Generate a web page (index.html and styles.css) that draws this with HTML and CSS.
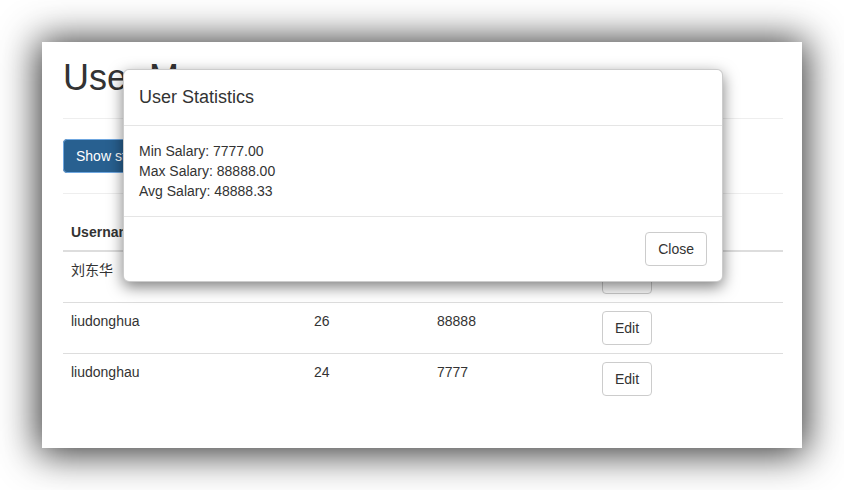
FILE: index.html
```html
<!DOCTYPE html>
<html lang="en">
<head>
<meta charset="utf-8">
<title>User Manager</title>
<link rel="stylesheet" href="styles.css">
</head>
<body>
<div class="stage">
  <div class="window">
    <div class="container">
      <h1 class="title">User Manager</h1>
      <hr class="rule">
      <button class="btn btn-primary btn-focus" type="button">Show statistics</button>
      <hr class="rule">
      <table class="table">
        <colgroup>
          <col class="c1"><col class="c2"><col class="c3"><col class="c4">
        </colgroup>
        <thead>
          <tr><th>Username</th><th>Age</th><th>Salary</th><th>Operation</th></tr>
        </thead>
        <tbody>
          <tr><td class="cjk">刘东华</td><td>30</td><td>50000</td><td><button class="btn btn-default" type="button">Edit</button></td></tr>
          <tr><td>liudonghua</td><td>26</td><td>88888</td><td><button class="btn btn-default" type="button">Edit</button></td></tr>
          <tr><td>liudonghau</td><td>24</td><td>7777</td><td><button class="btn btn-default" type="button">Edit</button></td></tr>
        </tbody>
      </table>
    </div>

    <div class="modal">
      <div class="modal-header">
        <h4 class="modal-title">User Statistics</h4>
      </div>
      <div class="modal-body">
        <div>Min Salary: 7777.00</div>
        <div>Max Salary: 88888.00</div>
        <div>Avg Salary: 48888.33</div>
      </div>
      <div class="modal-footer">
        <button class="btn btn-default" type="button">Close</button>
      </div>
    </div>
  </div>
</div>
</body>
</html>
```

FILE: styles.css
```css
* { box-sizing: border-box; }

html, body {
  margin: 0;
  padding: 0;
  background: #fff;
}

body {
  font-family: "Liberation Sans", Arial, "Noto Sans CJK SC", sans-serif;
  font-size: 14px;
  line-height: 20px;
  color: #333;
}

.stage {
  padding: 42px;
  height: 490px;
}

.window {
  position: relative;
  width: 760px;
  height: 406px;
  background: #fff;
  overflow: hidden;
  box-shadow: 0 2px 36px 4px rgba(0, 0, 0, 0.8);
}

.container {
  width: 720px;
  margin-left: 21px;
  padding-top: 16px;
}

.title {
  margin: 0 0 20px 0;
  font-size: 36px;
  line-height: 39.6px;
  font-weight: 500;
  color: #333;
  white-space: nowrap;
}

.rule {
  margin: 20px 0;
  border: 0;
  border-top: 1px solid #eee;
  height: 0;
}

.title + .rule { margin-top: 0; }

.btn {
  display: inline-block;
  font-family: inherit;
  font-size: 14px;
  line-height: 20px;
  padding: 6px 12px;
  border: 1px solid transparent;
  border-radius: 4px;
  cursor: pointer;
  white-space: nowrap;
}

.btn-primary {
  color: #fff;
  background: #286090;
  border-color: #204d74;
}

.btn-focus {
  outline: 1px solid #6fa7e0;
  outline-offset: -1px;
}

.btn-default {
  color: #333;
  background: #fff;
  border-color: #ccc;
}

.table {
  width: 720px;
  border-collapse: collapse;
  border-spacing: 0;
  table-layout: fixed;
}

.c1 { width: 243px; }
.c2 { width: 123px; }
.c3 { width: 165px; }
.c4 { width: 189px; }

.table th,
.table td {
  padding: 8px;
  text-align: left;
  vertical-align: top;
  line-height: 20px;
  white-space: nowrap;
}

.table th {
  font-weight: bold;
  vertical-align: bottom;
  border-bottom: 2px solid #ddd;
}

.table td {
  border-top: 1px solid #ddd;
}

.table tbody tr:first-child td { border-top: 0; }

.cjk {
  font-family: "Liberation Sans", "Noto Sans CJK SC", sans-serif;
}

.modal {
  position: absolute;
  top: 27px;
  left: 81px;
  width: 600px;
  background: #fff;
  border: 1px solid rgba(0, 0, 0, 0.2);
  border-radius: 6px;
  box-shadow: 0 5px 15px rgba(0, 0, 0, 0.5);
}

.modal-header {
  padding: 15px;
  border-bottom: 1px solid #e5e5e5;
}

.modal-title {
  margin: 0;
  font-size: 18px;
  line-height: 25px;
  font-weight: 500;
}

.modal-body {
  padding: 15px;
}

.modal-footer {
  padding: 15px;
  border-top: 1px solid #e5e5e5;
  display: flex;
  justify-content: flex-end;
}
```
